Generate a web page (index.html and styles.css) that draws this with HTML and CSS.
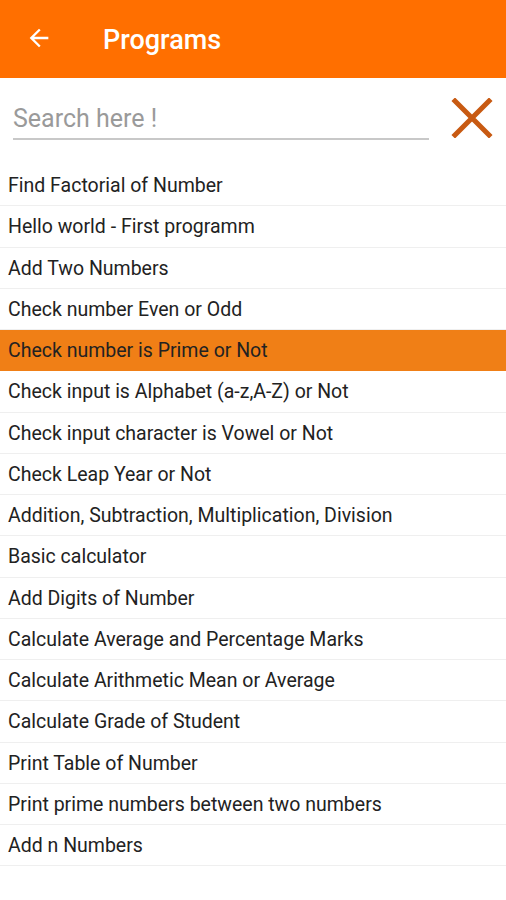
FILE: index.html
```html
<!DOCTYPE html>
<html>
<head>
<meta charset="utf-8">
<link rel="stylesheet" href="styles.css">
</head>
<body>
<header class="appbar">
  <svg class="back" width="24" height="24" viewBox="0 0 24 24"><path d="M20 11H7.83l5.59-5.59L12 4l-8 8 8 8 1.41-1.41L7.83 13H20v-2z" fill="#fff"/></svg>
  <h1 class="title">Programs</h1>
</header>
<div class="search">
  <div class="field">Search here !</div>
  <svg class="clear" width="42" height="40" viewBox="0 0 42 40"><path d="M4 3L38 37M38 3L4 37" stroke="#c85a12" stroke-width="5" stroke-linecap="square"/></svg>
</div>
<ul class="list">
  <li class="row">Find Factorial of Number</li>
  <li class="row">Hello world - First programm</li>
  <li class="row">Add Two Numbers</li>
  <li class="row">Check number Even or Odd</li>
  <li class="row active">Check number is Prime or Not</li>
  <li class="row">Check input is Alphabet (a-z,A-Z) or Not</li>
  <li class="row">Check input character is Vowel or Not</li>
  <li class="row">Check Leap Year or Not</li>
  <li class="row">Addition, Subtraction, Multiplication, Division</li>
  <li class="row">Basic calculator</li>
  <li class="row">Add Digits of Number</li>
  <li class="row">Calculate Average and Percentage Marks</li>
  <li class="row">Calculate Arithmetic Mean or Average</li>
  <li class="row">Calculate Grade of Student</li>
  <li class="row">Print Table of Number</li>
  <li class="row">Print prime numbers between two numbers</li>
  <li class="row">Add n Numbers</li>
</ul>
</body>
</html>
```
FILE: styles.css
```css
html, body {
  margin: 0;
  padding: 0;
  background: #fff;
  font-family: Roboto, "Noto Sans", sans-serif;
}
.appbar {
  height: 78px;
  background: #ff6f00;
  display: flex;
  align-items: center;
  box-sizing: border-box;
  padding-left: 25px;
}
.back {
  width: 28px;
  height: 28px;
  margin-top: -2px;
}
.title {
  margin: 2px 0 0 50px;
  color: #fff;
  font-size: 27px;
  font-weight: 500;
}
.search {
  display: flex;
  align-items: center;
  height: 87px;
  box-sizing: border-box;
  padding: 0 13px 0 13px;
}
.field {
  width: 416px;
  height: 36px;
  box-sizing: border-box;
  border-bottom: 2px solid #c8c8c8;
  color: #9a9a9a;
  font-size: 25px;
  line-height: 30px;
}
.clear {
  margin-left: 22px;
  margin-top: -7px;
}
.list {
  list-style: none;
  margin: 0;
  padding: 0;
}
.row {
  height: 41.25px;
  box-sizing: border-box;
  border-bottom: 1px solid #efefef;
  padding: 1px 0 0 8px;
  font-size: 19.5px;
  line-height: 40px;
  color: #222;
  white-space: nowrap;
}
.row.active {
  background: #f07f16;
  border-bottom-color: #f07f16;
}
```
